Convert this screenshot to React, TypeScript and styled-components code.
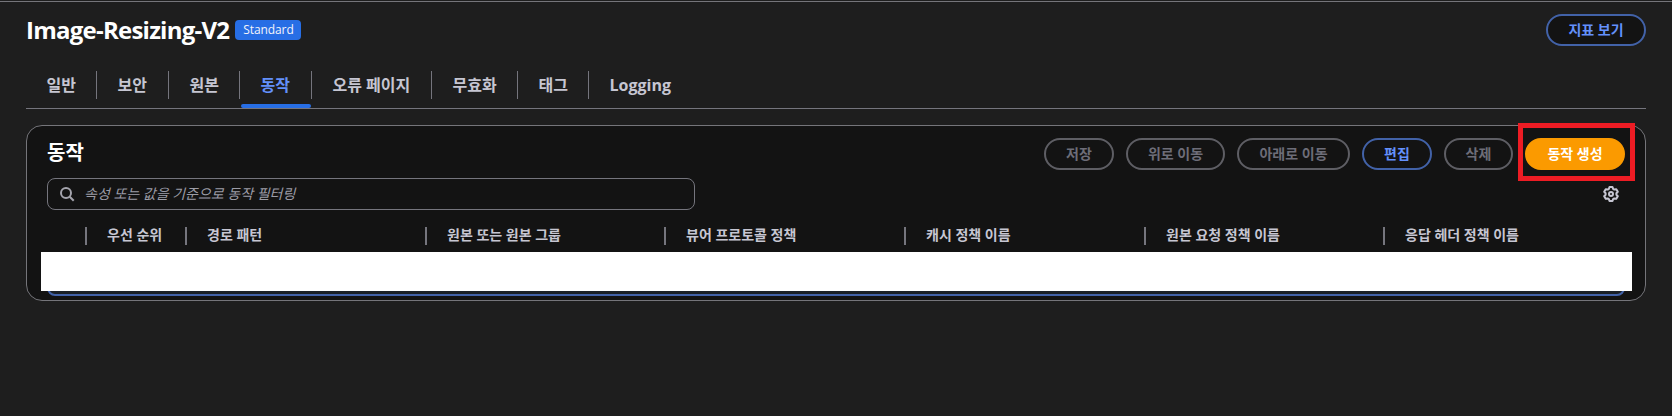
import React from 'react';
import styled, { createGlobalStyle } from 'styled-components';

const Global = createGlobalStyle`
  *, *::before, *::after { box-sizing: border-box; }
  html, body { margin: 0; background: #1e1e1e; }
  body { font-family: 'Open Sans', 'Noto Sans CJK KR', sans-serif; font-size: 14px; line-height: 20px; color: #c6c6cd; }
  button { font: inherit; cursor: pointer; }
`;

const Page = styled.main`
  width: 1672px;
  height: 416px;
  overflow: hidden;
  padding: 1px 26px 0;
  background: linear-gradient(#75757a, #75757a) 0 1px / 100% 1px no-repeat #1e1e1e;
`;

const PageHeader = styled.header`
  display: flex;
  height: 58px;
  padding-top: 13px;
  justify-content: space-between;
  align-items: flex-start;
`;

const TitleGroup = styled.div`
  display: flex;
  align-items: center;
  height: 32px;
`;

const Title = styled.h1`
  margin: 0;
  width: 209px;
  font-size: 24px;
  line-height: 30px;
  font-weight: 700;
  letter-spacing: -0.76px;
  white-space: nowrap;
  color: #fff;
`;

const Badge = styled.span`
  height: 20px;
  width: 66px;
  padding-left: 1px;
  text-align: center;
  border-radius: 4px;
  background: #276ee5;
  color: #f4f4fa;
  font-size: 12px;
  line-height: 20px;
  letter-spacing: -0.1px;
`;

type Tone = 'normal' | 'disabled' | 'primary';
const tones = {
  normal: { border: '#4262a8', text: '#6390fb', fill: '#131313' },
  disabled: { border: '#5e5e64', text: '#6d6d78', fill: '#131313' },
  primary: { border: '#fb9a00', text: '#ffffff', fill: '#fb9a00' },
};

const Button = styled.button<{ $tone: Tone; $width: number }>`
  width: ${p => p.$width}px;
  height: 32px;
  padding: 0;
  border: 2px solid ${p => tones[p.$tone].border};
  border-radius: 16px;
  background: ${p => tones[p.$tone].fill};
  color: ${p => tones[p.$tone].text};
  font-size: 14px;
  line-height: 20px;
  font-weight: 700;
  white-space: nowrap;
`;

const Tabs = styled.nav`
  display: flex;
  height: 50px;
  align-items: flex-start;
  border-bottom: 1px solid #75757d;
`;

const Tab = styled.a<{ $active?: boolean; $width: number }>`
  position: relative;
  width: ${p => p.$width}px;
  height: 49px;
  padding: 14px 0 0 20.5px;
  font-size: 16px;
  line-height: 24px;
  font-weight: 700;
  white-space: nowrap;
  color: ${p => (p.$active ? '#6390fb' : '#c6c6d2')};

  &:not(:last-child)::before {
    content: '';
    position: absolute;
    right: 0;
    top: 12px;
    width: 1px;
    height: 28px;
    background: #75757d;
  }
  &::after {
    content: '';
    display: ${p => (p.$active ? 'block' : 'none')};
    position: absolute;
    left: 1px;
    right: 1px;
    bottom: 0;
    height: 4px;
    border-radius: 2px;
    background: #276ee5;
  }
`;

const Panel = styled.section`
  position: relative;
  height: 176px;
  margin-top: 16px;
  padding: 12px 20px 0;
  border: 1px solid #75757a;
  border-radius: 16px;
  background: #131313;
`;

const PanelHeader = styled.div`
  display: flex;
  height: 40px;
  justify-content: space-between;
  align-items: flex-start;
`;

const PanelTitle = styled.h2`
  margin: 3px 0 0;
  font-size: 20px;
  line-height: 24px;
  color: #fff;
`;

const Actions = styled.div`
  display: flex;
  gap: 12px;
`;

const CreateSlot = styled.div`
  position: relative;
  display: flex;
`;

const Highlight = styled.div`
  position: absolute;
  left: -7px;
  top: -15px;
  width: 117px;
  height: 58px;
  border: 5px solid #ed1c24;
`;

const Tools = styled.div`
  display: flex;
  justify-content: space-between;
  align-items: center;
  padding-right: 6px;
`;

const Search = styled.div`
  display: flex;
  align-items: center;
  gap: 9px;
  width: 648px;
  height: 32px;
  padding-left: 11px;
  border: 1px solid #75757d;
  border-radius: 8px;
  font-style: italic;
  color: #9c9ca6;
`;

const HeaderRow = styled.div`
  display: flex;
  height: 42px;
  padding: 17px 0 0;
`;

const HeaderCell = styled.div<{ $width: number }>`
  flex: none;
  width: ${p => p.$width}px;
  height: 18px;
  padding-left: 20px;
  border-right: 2px solid #75757d;
  line-height: 16px;
  font-weight: 700;
  white-space: nowrap;
  color: #c6c6d2;
  &:last-child { border-right: 0; }
`;

const SelectedRow = styled.div`
  height: 44px;
  border: 2px solid #4262a8;
  border-radius: 8px;
  background: #1a2026;
`;

const Redaction = styled.div`
  position: absolute;
  left: 14px;
  right: 13px;
  top: 126px;
  height: 39px;
  background: #fff;
`;

const SearchIcon = () => (
  <svg width="16" height="16" viewBox="0 0 16 16" fill="none" stroke="#a4a4ad" strokeWidth="2">
    <circle cx="7" cy="7" r="5" />
    <path d="m10.7 10.7 4 4" />
  </svg>
);

const GearIcon = () => (
  <svg width="16" height="16" viewBox="0 0 16 16" fill="none" stroke="#c6c6d2" strokeWidth="2" strokeLinejoin="round">
    <path d="M6.5 1h3l.6 1.9 1.2.7 2-.4 1.5 2.6L13.4 7.3v1.4l1.4 1.5-1.5 2.6-2-.4-1.2.7-.6 1.9h-3l-.6-1.9-1.2-.7-2 .4-1.5-2.6 1.4-1.5V7.3L1.2 5.8l1.5-2.6 2 .4 1.2-.7z" />
    <circle cx="8" cy="8" r="2" />
  </svg>
);

const tabs: [string, number][] = [
  ['일반', 71], ['보안', 72], ['원본', 71], ['동작', 72],
  ['오류 페이지', 120], ['무효화', 86], ['태그', 71], ['Logging', 105],
];
const columns: [string, number][] = [
  ['', 40], ['우선 순위', 100], ['경로 패턴', 240], ['원본 또는 원본 그룹', 239],
  ['뷰어 프로토콜 정책', 240], ['캐시 정책 이름', 240], ['원본 요청 정책 이름', 239], ['응답 헤더 정책 이름', 240],
];

export default function App() {
  return (
    <Page>
      <Global />
      <PageHeader>
        <TitleGroup>
          <Title>Image-Resizing-V2</Title>
          <Badge>Standard</Badge>
        </TitleGroup>
        <Button $tone="normal" $width={100}>지표 보기</Button>
      </PageHeader>
      <Tabs>
        {tabs.map(([label, width]) => (
          <Tab key={label} $width={width} $active={label === '동작'}>{label}</Tab>
        ))}
      </Tabs>
      <Panel>
        <PanelHeader>
          <PanelTitle>동작</PanelTitle>
          <Actions>
            <Button $tone="disabled" $width={70}>저장</Button>
            <Button $tone="disabled" $width={99}>위로 이동</Button>
            <Button $tone="disabled" $width={113}>아래로 이동</Button>
            <Button $tone="normal" $width={70}>편집</Button>
            <Button $tone="disabled" $width={69}>삭제</Button>
            <CreateSlot>
              <Button $tone="primary" $width={100}>동작 생성</Button>
              <Highlight />
            </CreateSlot>
          </Actions>
        </PanelHeader>
        <Tools>
          <Search><SearchIcon />속성 또는 값을 기준으로 동작 필터링</Search>
          <GearIcon />
        </Tools>
        <HeaderRow>
          {columns.map(([label, width]) => (
            <HeaderCell key={label} $width={width}>{label}</HeaderCell>
          ))}
        </HeaderRow>
        <SelectedRow />
        <Redaction />
      </Panel>
    </Page>
  );
}
